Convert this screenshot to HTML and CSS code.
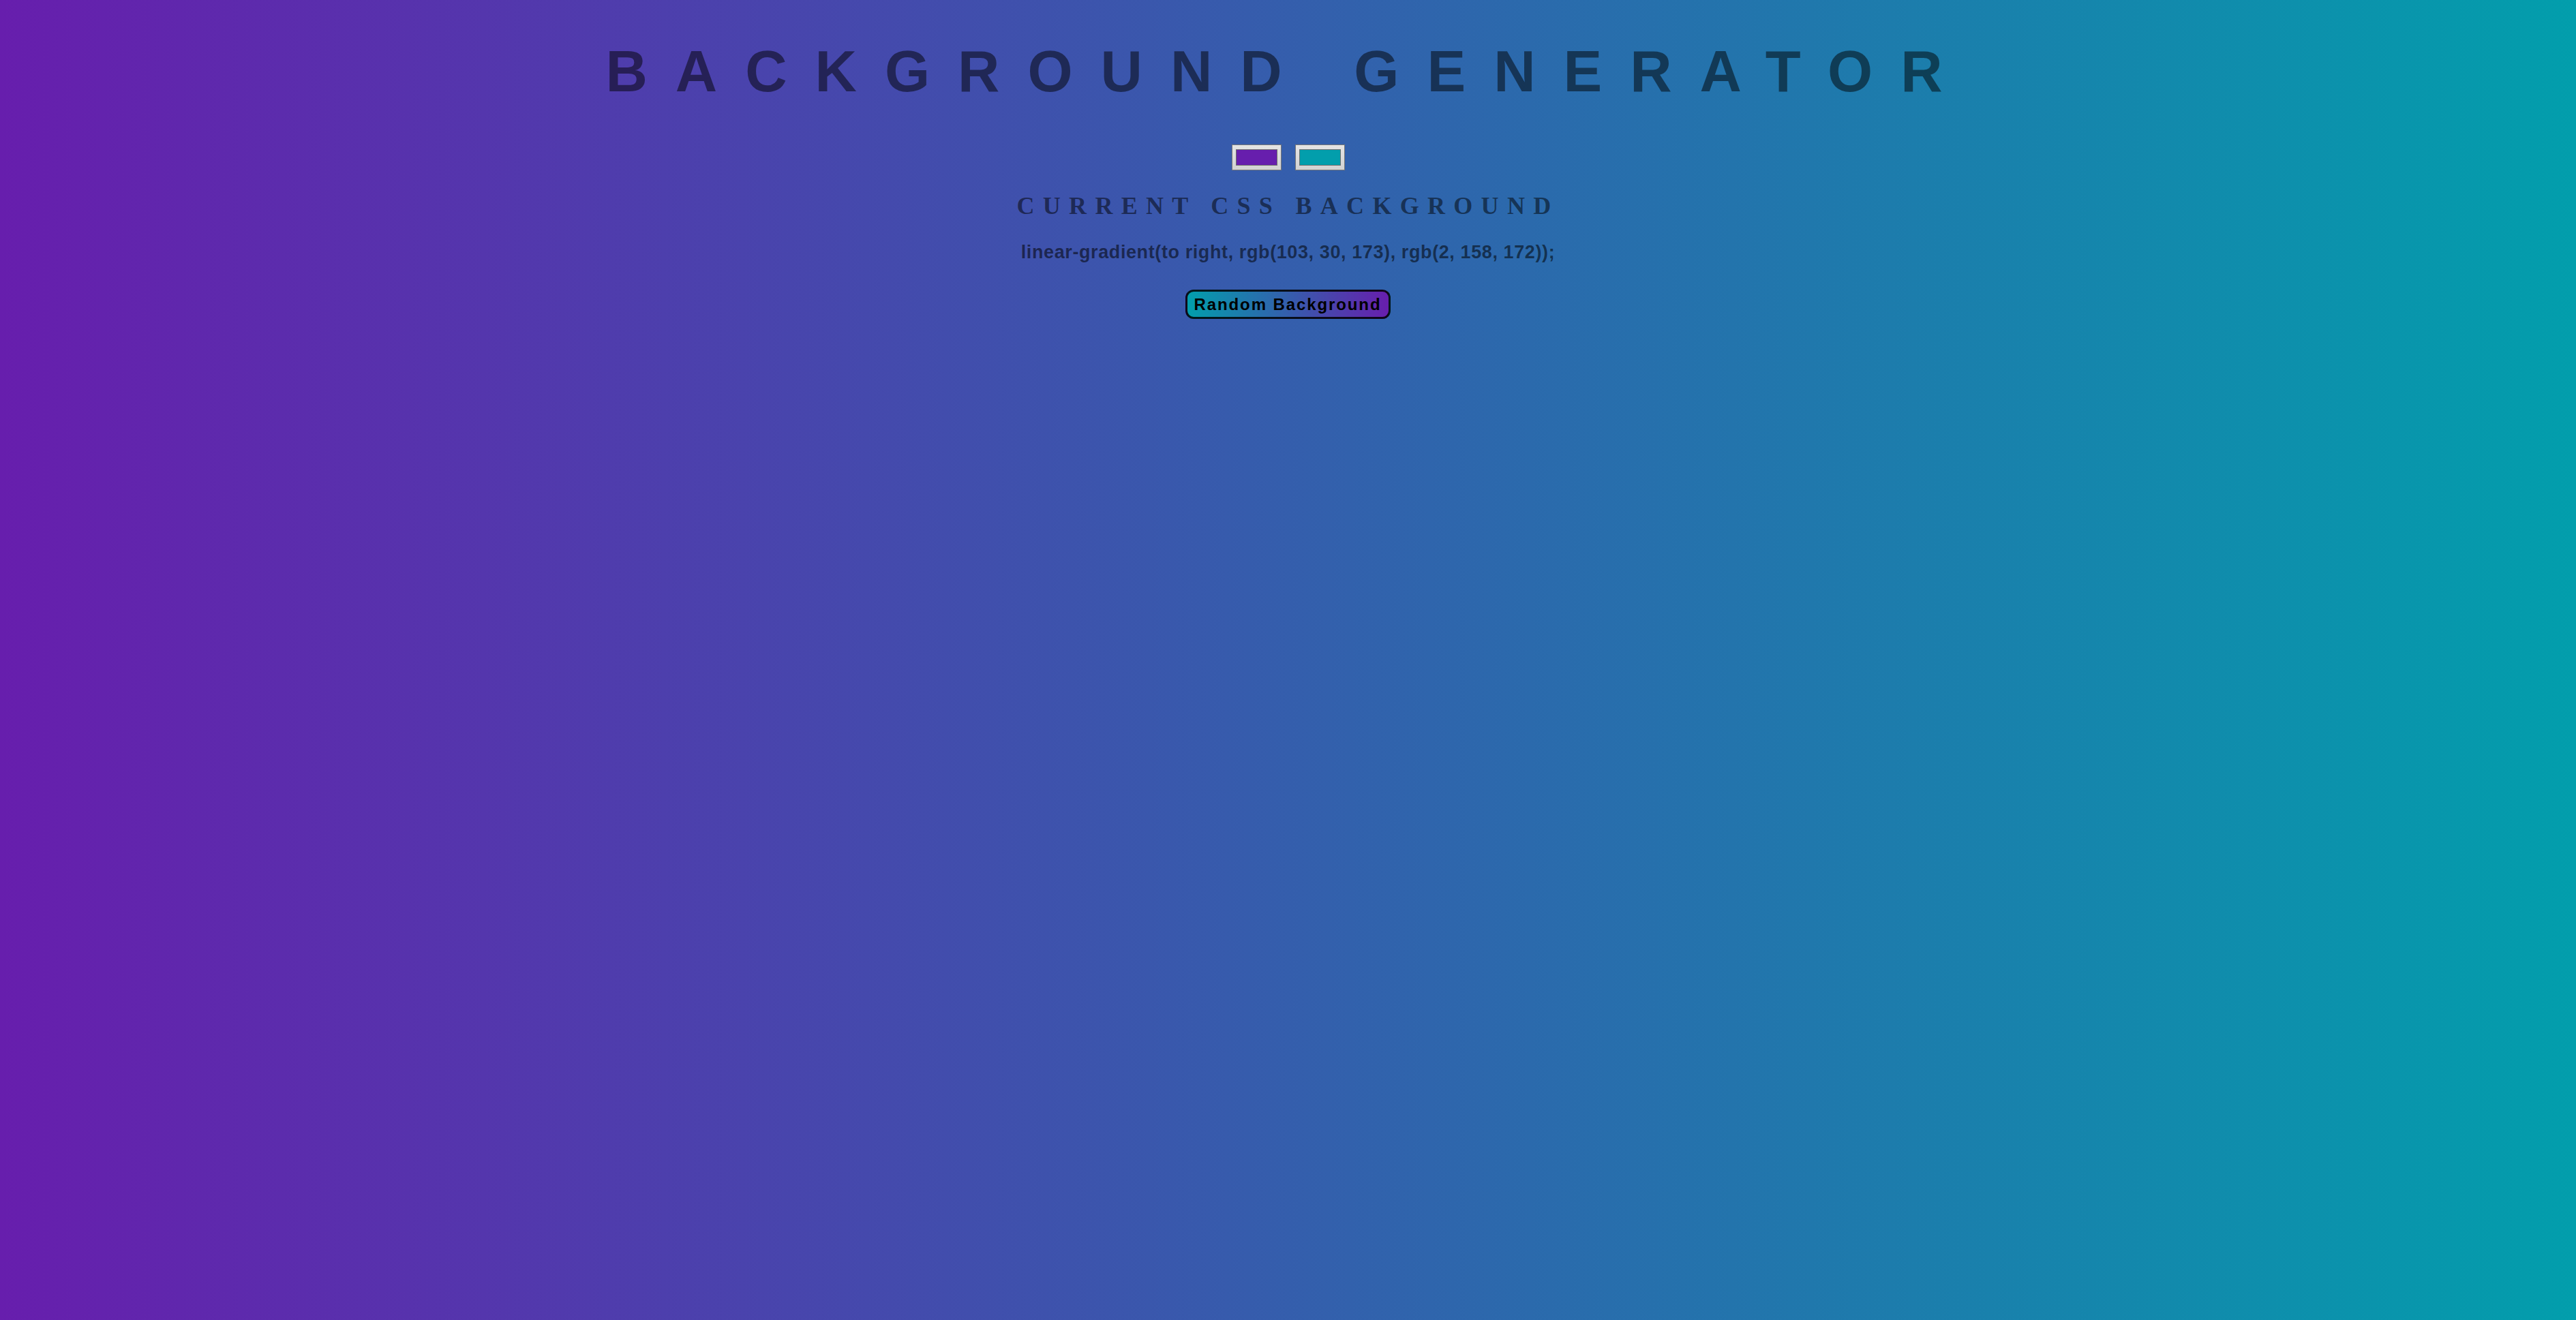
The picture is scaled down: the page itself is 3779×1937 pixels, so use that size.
FILE: index.html
```html
<!DOCTYPE html>
<html lang="en">
<head>
<meta charset="utf-8">
<title>Background Generator</title>
<link rel="stylesheet" href="styles.css">
</head>
<body class="page">
  <main class="generator">
    <h1 class="title">Background Generator</h1>
    <div class="pickers">
      <input class="picker" type="color" name="color1" value="#671ead">
      <input class="picker" type="color" name="color2" value="#029eac">
    </div>
    <h3 class="label">Current CSS Background</h3>
    <p class="value">linear-gradient(to right, rgb(103, 30, 173), rgb(2, 158, 172));</p>
    <button class="random" type="button">Random Background</button>
  </main>
</body>
</html>
```

FILE: styles.css
```css
html {
  height: 100%;
}

.page {
  margin: 0;
  min-height: 100%;
  background: linear-gradient(to right, rgb(103, 30, 173), rgb(2, 158, 172));
  color: rgba(0, 0, 0, 0.5);
  text-align: center;
}

.generator {
  display: flex;
  flex-direction: column;
  align-items: center;
}

.title {
  margin: 62px 0 0;
  font: 700 85px/1 "Liberation Sans", Arial, sans-serif;
  letter-spacing: 41px;
  text-transform: uppercase;
  color: rgba(0, 0, 0, 0.5);
}

.pickers {
  display: flex;
  gap: 20px;
  margin-top: 65px;
}

.picker {
  width: 73px;
  height: 38px;
  box-sizing: border-box;
  margin: 0;
  padding: 0;
  border: 1px solid #767676;
  background: linear-gradient(#e4e4e4, #d2d2d2);
  cursor: pointer;
}

.picker::-webkit-color-swatch-wrapper {
  padding: 6px 5px;
}

.picker::-webkit-color-swatch {
  border: 1px solid #6e6e6e;
  border-radius: 0;
}

.label {
  margin: 34px 0 0;
  font: 700 36px/1 "Liberation Serif", "Times New Roman", serif;
  letter-spacing: 12.3px;
  text-transform: uppercase;
  color: rgba(0, 0, 0, 0.52);
}

.value {
  margin: 37px 0 0;
  font: 700 27px/1 "Liberation Sans", Arial, sans-serif;
  letter-spacing: 0.6px;
  color: rgba(0, 0, 0, 0.55);
}

.random {
  margin-top: 41px;
  height: 43px;
  box-sizing: border-box;
  padding: 0 11px 0 10px;
  border: 3px solid rgba(0, 0, 0, 0.85);
  border-radius: 12px;
  background: linear-gradient(to right, rgb(2, 158, 172), rgb(103, 30, 173));
  color: #000;
  font: 700 24px/1 "Liberation Sans", Arial, sans-serif;
  letter-spacing: 1.9px;
  cursor: pointer;
}
```
